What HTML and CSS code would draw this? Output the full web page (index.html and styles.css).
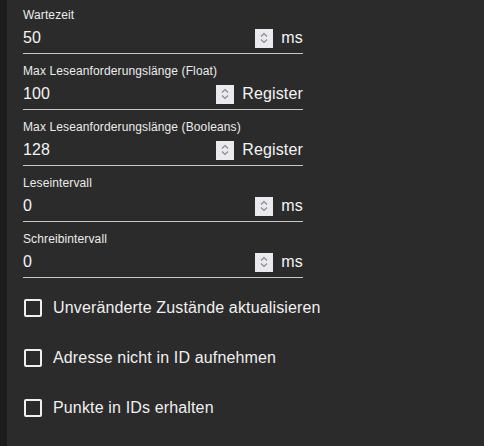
FILE: index.html
```html
<!DOCTYPE html>
<html lang="de">
<head>
<meta charset="utf-8">
<link rel="stylesheet" href="styles.css">
</head>
<body>
<div class="page">
  <div class="sidebar"></div>
  <main class="content">
    <div class="fields">
      <div class="field">
        <div class="label">Wartezeit</div>
        <div class="row"><span class="value">50</span><span class="spin"><svg width="10" height="14" viewBox="0 0 10 14"><path d="M2 5.5 L5 2.5 L8 5.5 M2 8.5 L5 11.5 L8 8.5" fill="none" stroke="#8a8a96" stroke-width="1.2"/></svg></span><span class="unit">ms</span></div>
      </div>
      <div class="field">
        <div class="label">Max Leseanforderungslänge (Float)</div>
        <div class="row"><span class="value">100</span><span class="spin"><svg width="10" height="14" viewBox="0 0 10 14"><path d="M2 5.5 L5 2.5 L8 5.5 M2 8.5 L5 11.5 L8 8.5" fill="none" stroke="#8a8a96" stroke-width="1.2"/></svg></span><span class="unit">Register</span></div>
      </div>
      <div class="field">
        <div class="label">Max Leseanforderungslänge (Booleans)</div>
        <div class="row"><span class="value">128</span><span class="spin"><svg width="10" height="14" viewBox="0 0 10 14"><path d="M2 5.5 L5 2.5 L8 5.5 M2 8.5 L5 11.5 L8 8.5" fill="none" stroke="#8a8a96" stroke-width="1.2"/></svg></span><span class="unit">Register</span></div>
      </div>
      <div class="field">
        <div class="label">Leseintervall</div>
        <div class="row"><span class="value">0</span><span class="spin"><svg width="10" height="14" viewBox="0 0 10 14"><path d="M2 5.5 L5 2.5 L8 5.5 M2 8.5 L5 11.5 L8 8.5" fill="none" stroke="#8a8a96" stroke-width="1.2"/></svg></span><span class="unit">ms</span></div>
      </div>
      <div class="field">
        <div class="label">Schreibintervall</div>
        <div class="row"><span class="value">0</span><span class="spin"><svg width="10" height="14" viewBox="0 0 10 14"><path d="M2 5.5 L5 2.5 L8 5.5 M2 8.5 L5 11.5 L8 8.5" fill="none" stroke="#8a8a96" stroke-width="1.2"/></svg></span><span class="unit">ms</span></div>
      </div>
    </div>
    <div class="checks">
      <label class="check"><span class="box"></span><span class="check-text">Unveränderte Zustände aktualisieren</span></label>
      <label class="check"><span class="box"></span><span class="check-text">Adresse nicht in ID aufnehmen</span></label>
      <label class="check"><span class="box"></span><span class="check-text">Punkte in IDs erhalten</span></label>
    </div>
  </main>
</div>
</body>
</html>
```
FILE: styles.css
```css
html, body {
  margin: 0;
  padding: 0;
  height: 100%;
  background: #2b2b2b;
  font-family: "Liberation Sans", Arial, sans-serif;
}
.page {
  display: flex;
  height: 100%;
}
.sidebar {
  width: 7px;
  background: #1c1c1c;
  flex: none;
}
.content {
  flex: 1;
  padding-left: 16px;
}
.fields {
  display: flex;
  flex-direction: column;
  gap: 2px;
  width: 280px;
}
.field {
  padding-top: 8px;
  padding-bottom: 5px;
  border-bottom: 1px solid #c8c8c8;
}
.label {
  font-size: 12px;
  line-height: 14px;
  letter-spacing: 0.12px;
  color: #ececec;
}
.row {
  display: flex;
  align-items: center;
  margin-top: 6px;
  height: 20px;
}
.value {
  flex: 1;
  font-size: 16px;
  line-height: 20px;
  letter-spacing: 0.15px;
  color: #f4f4f4;
}
.spin {
  width: 18px;
  height: 19px;
  background: #e9e9ee;
  display: flex;
  align-items: center;
  justify-content: center;
}
.unit {
  margin-left: 8px;
  font-size: 16px;
  line-height: 20px;
  letter-spacing: 0.15px;
  color: #f4f4f4;
}
.checks {
  display: flex;
  flex-direction: column;
  gap: 30px;
  margin-top: 20px;
}
.check {
  display: flex;
  align-items: center;
  height: 20px;
}
.box {
  width: 14px;
  height: 14px;
  border: 2px solid #f0f0f0;
  border-radius: 2px;
  margin-left: 1px;
}
.check-text {
  margin-left: 11px;
  font-size: 16px;
  line-height: 20px;
  letter-spacing: 0.15px;
  color: #f0f0f0;
}
```
